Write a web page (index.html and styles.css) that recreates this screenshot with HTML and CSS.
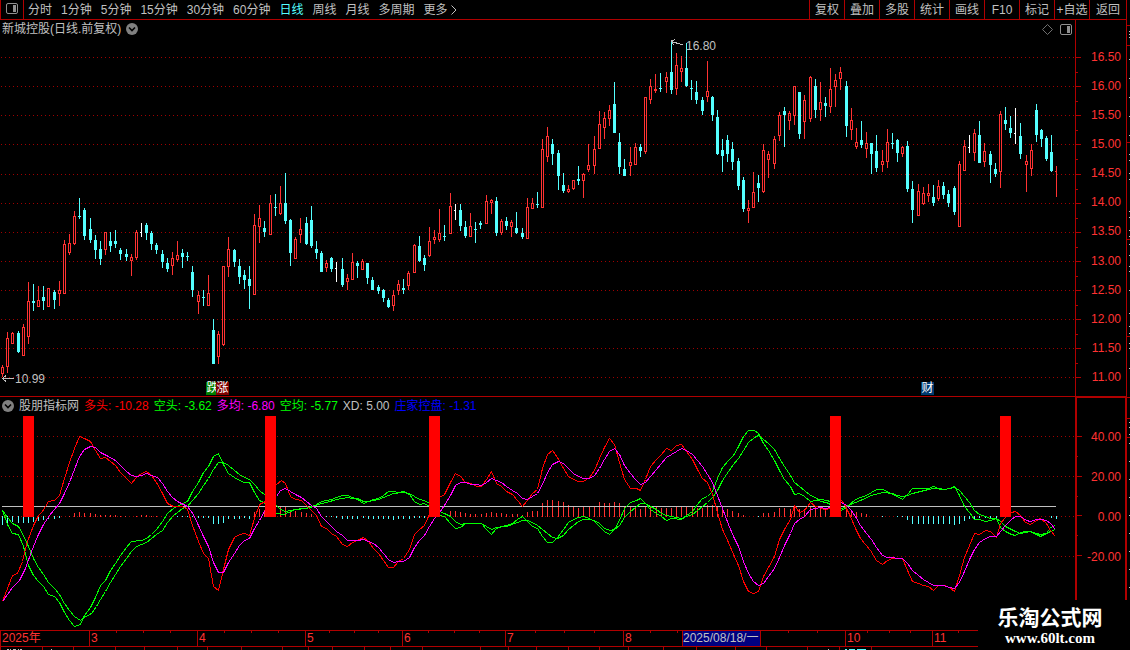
FILE: index.html
```html
<!DOCTYPE html>
<html lang="zh-CN">
  <head>
    <meta charset="UTF-8" />
    <meta name="viewport" content="width=device-width, initial-scale=1.0" />
    <title>新城控股 日线</title>
    <link rel="stylesheet" href="styles.css">
  </head>

  <body>
    <div class="app">
      <main class="main">
        <!-- Toolbar -->
        <nav class="toolbar">
          <button class="layout-btn" aria-label="布局">
            <svg width="12" height="11" viewBox="0 0 12 11">
              <rect x="0.5" y="0.5" width="11" height="10" rx="1.5" fill="none" stroke="#909090" />
              <rect x="7" y="2" width="3" height="7" fill="#909090" />
            </svg>
          </button>
          <div class="periods">
            <button>分时</button>
            <button>1分钟</button>
            <button>5分钟</button>
            <button>15分钟</button>
            <button>30分钟</button>
            <button>60分钟</button>
            <button class="active">日线</button>
            <button>周线</button>
            <button>月线</button>
            <button>多周期</button>
            <button>更多
              <svg width="6" height="10" viewBox="0 0 6 10"><path d="M0.5 0.5 L5 5 L0.5 9.5" fill="none" stroke="#c0c0c0" /></svg>
            </button>
          </div>
          <div class="tools">
            <button>复权</button>
            <button>叠加</button>
            <button>多股</button>
            <button>统计</button>
            <button>画线</button>
            <button>F10</button>
            <button>标记</button>
            <button>+自选</button>
            <button>返回</button>
          </div>
        </nav>

        <!-- Price chart -->
        <section class="panel price">
          <div class="plot">
            <svg id="priceChart" class="chart" viewBox="0 0 1075 376" preserveAspectRatio="none"></svg>
            <header class="panel-head">
              <span>新城控股(日线.前复权)</span>
              <svg class="drop" width="12" height="12" viewBox="0 0 12 12"><circle cx="6" cy="6" r="6" fill="#808080" /><path d="M3 4.5 L6 7.5 L9 4.5" fill="none" stroke="#000" stroke-width="1.6" /></svg>
              <span class="head-icons">
                <svg width="11" height="11" viewBox="0 0 11 11"><path d="M5.5 0.5 L10.5 5.5 L5.5 10.5 L0.5 5.5 Z" fill="none" stroke="#707070" /></svg>
                <svg width="12" height="11" viewBox="0 0 12 11"><rect x="0.5" y="0.5" width="11" height="10" rx="1.5" fill="none" stroke="#909090" /><rect x="7" y="2" width="3" height="7" fill="#909090" /></svg>
              </span>
            </header>
            <span class="mark high">16.80</span>
            <span class="mark low">10.99</span>
            <span class="badge fall">跌</span>
            <span class="badge rise">涨</span>
            <span class="badge report">财</span>
          </div>
          <div class="axis">
            <svg id="priceTicks" class="chart" viewBox="0 0 50 376" preserveAspectRatio="none"></svg>
            <span>16.50</span>
            <span>16.00</span>
            <span>15.50</span>
            <span>15.00</span>
            <span>14.50</span>
            <span>14.00</span>
            <span>13.50</span>
            <span>13.00</span>
            <span>12.50</span>
            <span>12.00</span>
            <span>11.50</span>
            <span>11.00</span>
          </div>
        </section>

        <!-- Indicator chart -->
        <section class="panel indicator">
          <div class="plot">
            <svg id="indicatorChart" class="chart" viewBox="0 0 1075 233" preserveAspectRatio="none"></svg>
            <header class="panel-head">
              <svg class="drop" width="12" height="12" viewBox="0 0 12 12"><circle cx="6" cy="6" r="6" fill="#808080" /><path d="M3 4.5 L6 7.5 L9 4.5" fill="none" stroke="#000" stroke-width="1.6" /></svg>
              <span>股朋指标网</span>
              <span class="red">多头: -10.28</span>
              <span class="green">空头: -3.62</span>
              <span class="magenta">多均: -6.80</span>
              <span class="green">空均: -5.77</span>
              <span>XD: 5.00</span>
              <span class="blue">庄家控盘: -1.31</span>
            </header>
          </div>
          <div class="axis">
            <svg id="indicatorTicks" class="chart" viewBox="0 0 50 233" preserveAspectRatio="none"></svg>
            <span>40.00</span>
            <span>20.00</span>
            <span>0.00</span>
            <span>-20.00</span>
          </div>
        </section>

        <!-- Time axis -->
        <div class="timeline">
          <svg id="timeTicks" class="chart" viewBox="0 0 1126 15" preserveAspectRatio="none"></svg>
          <span>2025年</span>
          <span>3</span>
          <span>4</span>
          <span>5</span>
          <span>6</span>
          <span>7</span>
          <span>8</span>
          <span class="current">2025/08/18/一</span>
          <span></span>
          <span>10</span>
          <span>11</span>
        </div>
        <div class="status">
          <svg id="statusStrip" class="chart" viewBox="0 0 1126 3" preserveAspectRatio="none"></svg>
        </div>
      </main>
      <aside class="side">
        <svg id="sideStrip" class="chart" viewBox="0 0 4 650" preserveAspectRatio="none"></svg>
      </aside>
      <div class="site">
        <strong>乐淘公式网</strong>
        <a href="#">www.60lt.com</a>
      </div>
    </div>
    <script src="script.js"></script>
  </body>
</html>
```
FILE: styles.css
```css
* {
  box-sizing: border-box;
}

body {
  margin: 0;
  background: #000;
  color: #c0c0c0;
  font: 12px/16px "Liberation Sans", "Noto Sans CJK SC", sans-serif;
  overflow: hidden;
}

button {
  padding: 0;
  border: none;
  background: none;
  color: inherit;
  font: inherit;
  white-space: nowrap;
  cursor: pointer;
}

.app {
  position: relative;
  display: flex;
  height: 100vh;
}

.main {
  flex: 1;
  min-width: 0;
  display: grid;
  grid-template-rows: 20px 377fr 233fr 17px 3px;
}

/* Toolbar */
.toolbar {
  display: flex;
  border-bottom: 1px solid #b00000;
}

.layout-btn {
  display: flex;
  align-items: center;
  justify-content: center;
  width: 24px;
  padding-bottom: 2px;
  border-left: 1px solid #b00000;
  border-right: 1px solid #b00000;
}

.periods {
  flex: 1;
  display: flex;
  gap: 9px;
  padding-left: 4px;
}

.periods .active {
  color: #54ffff;
}

.periods svg {
  vertical-align: -1px;
}

.tools {
  display: flex;
}

.tools button {
  width: 35px;
  border-left: 1px solid #b00000;
}

.tools button:last-child {
  width: 37px;
}

/* Chart panels */
.panel {
  display: flex;
  min-height: 0;
}

.price {
  border-bottom: 1px solid #b00000;
}

.plot {
  position: relative;
  flex: 1;
  min-width: 0;
}

.chart {
  position: absolute;
  top: 0;
  left: 0;
  width: 100%;
  height: 100%;
  shape-rendering: crispEdges;
}

.panel-head {
  position: relative;
  display: flex;
  align-items: center;
  gap: 5px;
  height: 18px;
  padding: 0 3px 0 2px;
  white-space: pre;
}

.head-icons {
  display: flex;
  gap: 7px;
  margin-left: auto;
}

.axis {
  position: relative;
  display: flex;
  flex-direction: column;
  justify-content: space-between;
  width: 51px;
  padding: 29px 5px 11px 0;
  border-left: 1px solid #b00000;
  color: #ff3232;
  text-align: right;
}

.indicator .axis {
  justify-content: flex-start;
  gap: 24px;
  padding-top: 31px;
  border-left-width: 2px;
  border-top: 1px solid #b00000;
}

.red { color: #ff0000; }
.green { color: #00ff00; }
.magenta { color: #ff00ff; }
.blue { color: #0000ff; }

/* Labels over the price chart */
.mark {
  position: absolute;
}

.high {
  top: 18px;
  left: 686px;
}

.low {
  bottom: 9px;
  left: 15px;
}

.badge {
  position: absolute;
  bottom: 1px;
  height: 13px;
  width: 13px;
  color: #fff;
  line-height: 13px;
  text-align: center;
}

.fall {
  left: 206px;
  background: #008000;
}

.rise {
  left: 216px;
  background: #800000;
}

.report {
  left: 921px;
  background: #003a70;
}

/* Time axis */
.timeline {
  position: relative;
  display: grid;
  grid-template-columns: 89fr 108fr 108fr 97fr 103fr 118fr 59fr 78fr 85fr 87fr 194fr;
  border-top: 1px solid #b00000;
  border-bottom: 1px solid #b00000;
  color: #ff3232;
  line-height: 15px;
}

.timeline span {
  min-width: 0;
  padding-left: 1px;
  border-left: 1px solid #b00000;
  white-space: nowrap;
}

.timeline .current {
  padding-left: 0;
  background: #000080;
  color: #c0c0c0;
}

.status {
  position: relative;
}

.side {
  position: relative;
  width: 4px;
}

/* Site name */
.site {
  position: absolute;
  right: 0;
  bottom: 0;
  width: 152px;
  height: 50px;
  padding: 6px 8px 0 0;
  background: #000;
  color: #fff;
  text-align: center;
}

.site strong {
  display: block;
  font-size: 21px;
  line-height: 24px;
}

.site a {
  display: block;
  color: #fff;
  font: bold 15px/16px "Liberation Serif", serif;
  text-decoration: none;
}
```
FILE: script.js
```js
const NS = "http://www.w3.org/2000/svg";
const RED = "#ff3232";
const CYAN = "#54ffff";
const LINE = "#b00000";

// Points are stored on a grid 3 times finer than the screen,
// each block relative to its own [x, y] origin.
// Candle: x, type, high, body top, body bottom, low
const candleBlocks = [
  { origin: [0, 180], rows: `
    7 r 556 562 581 590; 22 r 457 475 560 578; 37 r 457 458 491 491; 55 c 454 459 516 519; 70 r 433 441 527 527
    85 r 307 363 470 491; 100 c 312 363 369 392; 115 r 319 360 380 380; 130 c 318 351 363 389; 145 r 324 324 380 380
    163 c 331 336 360 386; 178 r 304 331 341 377; 193 r 181 192 341 341; 208 r 163 189 218 224; 223 r 94 108 191 194
    238 c 54 108 111 117; 253 c 84 90 168 180; 271 c 114 147 180 189; 286 c 165 180 210 237; 301 c 183 207 237 254
    316 r 156 156 209 224; 331 c 156 183 198 216; 346 c 150 183 192 204; 361 c 204 210 222 240; 379 c 207 222 231 243
    394 r 223 231 242 287; 409 r 151 156 234 239; 424 w 129 156 159 171; 439 c 129 135 159 180; 454 c 153 159 192 209
    469 c 189 195 210 222; 487 c 210 222 246 264; 502 c 234 249 267 276; 517 r 217 234 257 284; 532 r 183 225 239 245
    547 c 207 219 231 264; 562 c 216 228 231 243; 577 c 258 276 330 351; 595 r 334 345 366 401; 610 c 330 351 354 378
    625 r 286 339 377 377; 640 c 417 450 552 552; 655 r 454 461 530 551; 670 r 258 258 494 497; 685 r 171 207 260 290
    703 c 207 210 246 261` },
  { origin: [230, 160], rows: `
    28 c 297 318 351 372; 43 c 330 345 360 387; 58 c 318 357 378 447; 73 r 163 195 404 404; 88 r 136 174 200 248
    103 c 183 204 216 231; 121 r 106 129 224 224; 136 c 102 141 144 168; 151 r 79 129 161 165; 166 c 39 129 183 192
    181 c 177 180 279 318; 196 r 232 237 296 296; 211 r 175 207 224 248; 229 c 171 189 252 255; 244 c 138 180 258 264
    259 c 243 267 279 297; 274 c 273 279 336 336; 289 r 301 309 323 335; 304 c 291 294 327 336; 319 w 306 324 327 366
    337 c 294 327 375 381; 352 r 343 354 365 389; 367 r 280 306 359 359; 382 c 303 309 318 354; 397 r 298 303 329 329
    412 c 309 309 354 372; 427 c 351 360 390 390; 445 c 375 381 393 402; 460 c 387 390 414 426; 475 c 414 420 441 444
    490 r 391 405 437 452; 505 r 361 372 392 404; 520 c 357 384 390 402; 535 r 334 339 377 389; 553 r 253 255 338 338
    568 c 228 258 303 306; 583 c 285 294 315 333; 598 r 202 243 287 290; 613 r 211 231 239 251; 628 r 148 219 239 245
    643 c 195 228 231 243; 661 r 100 138 221 221; 676 w 132 150 153 180; 691 c 132 150 198 213; 706 c 183 201 228 234` },
  { origin: [460, 110], rows: `
    31 r 310 348 380 380; 46 c 336 357 360 399; 61 c 333 339 345 357; 79 r 256 273 341 341; 94 r 268 270 278 311
    109 c 261 273 369 378; 124 r 328 333 368 374; 139 c 321 333 348 360; 154 r 331 336 350 380; 169 c 306 354 369 372
    187 c 354 369 381 387; 202 r 265 291 386 386; 217 r 265 279 296 296; 232 c 246 282 285 294; 247 r 88 117 293 293
    262 r 52 78 140 155; 277 c 87 102 132 165; 295 c 120 129 198 240; 310 c 189 225 243 249; 325 r 226 237 245 248
    340 r 210 210 236 239; 355 c 168 207 213 225; 370 r 190 192 212 263; 385 r 103 165 179 185; 403 r 79 117 167 191
    418 r 4 42 116 116; 433 r 7 24 53 86; 448 r -15 0 26 47; 463 c -84 -18 69 69; 478 c 69 96 171 192
    493 c 147 177 198 198; 511 r 112 156 167 197; 526 r 100 111 164 164; 541 c 102 111 123 141` },
  { origin: [630, 30], rows: `
    46 r 202 202 365 371; 61 r 148 168 209 221; 76 r 133 177 182 188; 91 c 129 174 177 186; 109 r 127 141 155 188
    124 c 30 126 180 192; 139 r 70 105 176 194; 154 r 79 114 125 155; 169 c 40 114 168 171; 184 c 150 174 177 210
    199 c 153 186 210 222; 217 c 201 210 243 255; 232 r 94 183 200 215; 247 c 198 201 255 273; 262 c 240 261 372 375
    277 c 327 360 378 426; 292 c 315 330 372 396; 307 c 336 357 396 420; 325 c 384 393 468 480; 340 c 441 450 537 546
    355 r 511 534 542 578; 370 r 427 486 533 533; 385 c 435 459 474 516; 400 r 343 360 485 488; 415 r 364 372 389 443
    433 r 319 327 401 416; 448 r 247 255 317 332; 463 c 231 243 255 351; 478 r 244 249 272 299; 493 r 168 168 257 284
    508 c 186 186 312 327; 523 r 196 210 275 326; 541 r 139 141 266 275; 556 c 147 168 240 264; 571 r 157 216 239 272
    586 c 201 219 228 261; 601 r 115 177 230 248; 616 r 133 150 170 230; 631 r 112 126 146 179` },
  { origin: [830, 60], rows: `
    49 c 63 78 198 231; 64 r 145 180 209 239; 79 r 205 246 260 266; 94 c 183 240 255 264; 109 r 217 249 266 293
    124 c 249 249 282 342; 139 c 225 273 324 336; 157 r 271 303 314 335; 172 r 208 246 305 323; 187 c 219 249 252 267
    202 c 237 240 279 306; 217 r 259 261 281 290; 232 c 243 258 387 396; 247 c 363 387 450 489; 265 r 373 393 467 467
    280 r 382 399 431 434; 295 r 373 399 407 425; 310 c 375 411 429 438; 325 r 361 378 416 422; 340 c 366 378 405 417
    355 c 390 402 429 441; 373 c 378 384 456 465; 388 r 304 312 500 500; 403 r 241 258 332 332; 418 w 225 261 264 279
    433 r 208 219 278 302; 448 c 183 225 309 309; 463 r 250 273 305 320; 481 c 273 282 315 369; 496 c 309 327 342 351
    511 r 154 162 335 383; 526 c 141 180 192 210; 541 c 168 204 219 234; 556 w 144 219 222 252; 571 c 189 228 282 297
    589 r 286 303 314 395; 604 r 253 270 326 347; 619 c 132 150 225 246; 634 c 207 210 237 261; 649 c 228 234 297 303
    664 c 225 276 333 336; 679 r 318 333 336 410` },
];

// Origins of the four indicator blocks
const origins = [[0, 395], [270, 395], [540, 395], [820, 375]];

const curves = [
  { color: "#00ff00", blocks: [
    "7,347 22,388 37,415 55,418 70,455 85,512 100,540 115,560 130,575 145,598 163,604 178,622 193,653 208,675 223,693 240,687 253,662 270,638 286,607 301,570 316,555 331,526 346,506 361,480 379,458 394,439 424,437 439,430 454,418 470,402 487,380 502,355 520,341 547,326 563,318 577,290 595,263 610,233 625,213 640,183 655,175 670,208 685,235 703,248 718,257 733,262 748,262 763,293 778,315 795,325",
    "18,354 40,358 55,352 77,342 100,340 125,337 139,327 155,318 170,315 185,313 200,308 217,300 232,300 247,306 262,314 279,325 294,319 309,314 324,310 340,301 355,290 371,288 386,292 401,289 417,297 432,320 447,328 462,325 478,335 508,360 522,363 540,385 557,401 571,396 587,386 604,384 618,385 633,385 649,402 664,417 679,399 694,395 710,390 726,384 741,373 757,363 772,380 788,394 802,401",
    "7,423 22,441 37,442 53,427 70,404 85,383 100,373 115,366 130,364 147,371 163,378 178,395 194,410 208,417 223,404 238,375 254,340 270,322 290,317 302,310 317,325 332,343 348,355 363,365 380,376 393,370 424,372 440,362 456,349 471,328 486,311 502,303 517,290 532,250 547,217 564,197 580,180 595,154 610,125 625,106 643,106 656,114 671,145 686,165 703,195 719,225 734,252 750,273 764,298 779,295 794,304 812,319",
    "0,373 20,376 30,380 64,405 80,397 106,374 122,366 138,361 153,353 168,344 187,344 203,350 217,357 232,365 247,373 262,358 277,341 325,341 341,335 356,341 373,343 388,340 404,335 418,362 433,393 449,412 463,432 479,434 495,439 510,435 528,430 540,458 556,470 573,478 587,482 602,473 620,469 631,470 648,477 662,485 678,476 692,457 707,451"] },
  { color: "#00ff00", blocks: [
    "7,347 22,368 37,385 55,395 70,420 85,455 100,490 115,517 130,539 145,562 163,580 178,598 193,624 208,645 223,665 240,675 253,668 275,654 289,635 301,612 316,588 331,562 346,538 361,513 379,489 394,469 409,455 424,449 439,441 454,430 470,418 487,405 502,382 520,362 532,353 547,339 563,333 577,317 595,296 610,270 625,250 640,222 655,203 670,201 685,212 703,225 718,239 733,246 748,253 763,268 778,285 795,300",
    "18,332 32,342 46,350 77,343 109,340 125,335 155,325 170,322 200,312 232,306 247,309 262,311 279,318 294,319 309,315 324,313 340,307 355,300 371,295 401,291 417,296 432,304 447,312 462,317 478,326 508,348 522,354 540,365 557,380 571,388 587,385 633,385 649,394 664,403 679,398 710,394 741,383 757,376 772,376 788,381 802,391",
    "7,403 22,416 37,427 53,429 70,421 85,404 100,391 115,380 130,374 147,372 163,375 178,386 194,399 210,405 223,403 238,391 254,368 270,350 285,338 302,325 317,325 332,335 348,344 363,354 380,361 393,365 424,370 440,364 456,357 471,345 486,335 502,322 517,307 532,285 547,257 564,230 580,207 595,190 610,165 625,143 643,128 656,122 671,132 686,146 703,163 719,190 734,213 750,241 764,263 779,275 794,287 812,301 826,307",
    "0,380 20,382 30,388 64,400 80,393 106,382 122,376 153,362 187,352 217,356 232,360 247,365 262,361 277,354 300,348 325,343 341,340 373,344 404,338 418,347 433,363 449,383 463,405 479,417 495,425 510,430 528,430 540,440 556,454 573,464 587,470 602,474 631,470 648,474 662,479 678,476 692,468 707,463"] },
  { color: "#ff0000", blocks: [
    "7,620 22,580 37,542 52,535 67,500 82,440 100,392 115,362 128,348 145,320 163,315 178,302 193,250 208,203 223,160 238,125 253,129 270,138 286,165 301,190 316,187 331,200 346,210 361,231 376,247 394,265 409,246 424,235 439,230 454,240 470,262 487,294 502,325 520,333 547,333 563,342 577,392 595,440 610,475 625,490 640,575 655,585 670,523 685,464 703,427 718,418 733,415 748,420 763,370 778,328 795,318",
    "18,268 33,257 46,264 62,304 77,313 93,317 109,331 125,346 139,362 155,393 170,401 185,416 200,425 217,447 232,454 247,443 262,436 279,428 294,439 309,461 324,474 340,497 355,517 371,517 386,499 401,491 417,464 432,417 447,402 462,392 472,370 490,335 508,308 522,298 540,262 557,235 571,243 587,263 604,266 618,274 633,273 649,252 664,230 679,265 694,275 710,290 726,297 741,317 757,333 772,315 788,294 802,284",
    "7,220 22,178 37,167 53,188 70,219 85,245 100,254 115,260 130,259 147,248 163,227 178,189 194,156 208,131 223,148 238,203 254,254 270,280 290,281 302,287 315,252 332,215 348,193 363,177 380,160 393,167 410,152 424,148 440,170 456,192 471,222 486,251 502,262 517,297 532,353 547,402 564,443 580,478 595,512 610,560 625,590 640,596 656,590 671,545 686,517 703,483 719,432 734,404 750,372 764,331 779,353 794,346 812,321 826,333",
    "2,397 17,405 64,375 72,389 91,425 106,460 122,490 152,525 168,556 187,568 203,555 217,550 247,549 262,585 277,619 294,625 310,630 325,634 341,645 356,632 373,632 388,638 404,650 418,600 433,547 449,512 463,475 479,477 495,466 510,470 528,486 540,445 556,427 573,412 586,409 600,422 616,443 631,448 648,437 662,430 678,446 692,467 707,485"] },
  { color: "#ff00ff", blocks: [
    "7,620 37,577 58,557 77,520 95,468 112,425 130,388 148,360 178,326 193,296 208,262 223,222 238,183 253,163 270,154 286,156 301,172 320,181 346,197 361,211 379,228 394,240 409,245 424,241 439,235 454,240 472,248 487,265 502,289 517,308 532,318 563,333 580,357 595,391 610,424 625,455 640,502 655,531 670,532 685,502 703,474 718,452 733,437 748,430 763,400 778,376 793,348 810,325",
    "18,303 32,286 46,279 62,289 77,299 93,306 109,318 125,330 139,341 155,365 185,394 200,408 217,422 232,436 262,436 279,433 294,438 309,446 324,458 340,474 355,493 371,502 386,498 401,500 417,486 432,458 447,435 462,420 478,395 493,370 508,352 522,330 540,300 557,272 571,262 587,262 604,267 618,268 633,271 649,261 664,250 679,256 694,263 710,275 726,285 741,296 757,309 772,314 788,304 802,296",
    "7,268 22,232 37,207 55,200 70,206 85,221 100,236 115,244 130,250 147,250 163,242 178,220 194,194 208,169 223,160 238,177 254,210 270,235 285,254 302,268 315,262 332,243 348,222 363,204 380,188 393,179 410,169 424,160 440,165 456,177 471,196 486,215 502,238 517,262 532,300 547,340 564,387 580,425 595,455 610,500 625,535 640,558 656,571 671,566 686,545 703,520 719,488 734,450 750,415 764,385 779,374 794,363 812,344",
    "0,398 15,401 30,396 64,382 80,392 92,403 106,424 122,452 138,474 153,492 168,518 187,540 203,548 247,551 262,566 277,587 294,600 310,613 325,622 341,631 370,631 388,636 404,641 418,622 433,588 449,552 463,524 479,502 495,490 510,484 528,484 540,470 556,450 573,432 587,425 600,423 620,435 631,440 648,434 662,432 678,436 692,445 707,464"] },
];

// Histogram: x, end of the bar; ends above the zero line are red
const histogram = [
  "7,390 22,390 37,382 55,384 70,384 85,384 100,382 115,378 130,375 145,372 163,372 178,369 208,362 223,353 238,350 253,354 270,353 286,357 301,360 316,360 331,360 346,360 361,362 376,362 409,362 424,360 439,360 454,362 470,362 532,366 547,366 563,366 577,367 595,369 610,369 625,370 640,387 655,387 670,384 685,373 703,372 718,372 733,370 748,372 763,350 778,342 793,345",
  "32,336 46,334 62,346 77,349 93,351 109,354 125,357 170,366 185,366 200,370 217,372 232,372 247,372 262,372 279,370 294,372 309,372 324,372 340,372 355,372 371,375 386,372 401,372 417,372 432,369 447,369 462,369 542,348 557,348 571,351 587,354 602,357 617,357 633,357 649,354 664,351 679,354 694,354 710,357 726,357 741,357 757,361 772,351 788,348 802,348 817,324 833,315 848,315 865,318",
  "70,321 85,331 100,336 115,339 130,336 147,334 163,334 178,321 194,324 208,324 223,321 238,324 254,336 270,336 286,340 302,342 317,336 332,334 348,336 363,339 380,339 393,339 410,334 425,336 440,336 456,336 471,340 486,340 502,331 517,331 532,334 547,340 562,342 577,348 595,354 610,360 656,366 671,354 686,354 703,351 719,339 734,339 750,342 764,333 779,342 794,342 812,334 826,336",
  "1,399 16,402 80,400 94,405 109,411 124,414 139,417 187,426 232,426 247,426 262,434 277,447 294,447 310,447 325,447 341,447 356,447 370,447 388,447 404,450 418,447 433,438 449,432 463,432 479,430 495,430 510,430 528,430 694,430 709,432",
];

function draw(svg, tag, attrs) {
  const el = document.createElementNS(NS, tag);
  for (const name in attrs) el.setAttribute(name, attrs[name]);
  svg.appendChild(el);
}

function rect(svg, x, y, width, height, fill) {
  draw(svg, "rect", { x, y, width, height, fill });
}

function gridLine(svg, y) {
  draw(svg, "line", { x1: 1, x2: 1075, y1: y + 0.5, y2: y + 0.5, stroke: "#a00000", "stroke-dasharray": "1 3" });
}

function drawPrice() {
  const svg = document.getElementById("priceChart");
  const ticks = document.getElementById("priceTicks");
  [37, 66, 95, 124, 154, 183, 212, 241, 270, 299, 328, 357].forEach((y, i) => {
    gridLine(svg, y);
    rect(ticks, 0, y, 5, 1, LINE);
    if (i < 11) rect(ticks, 0, y + 15, 2, 1, LINE);
  });

  const colors = { r: RED, c: CYAN, w: "#ffffff" };
  for (const { origin, rows } of candleBlocks) {
    for (const row of rows.trim().split(/[;\n]\s*/)) {
      const [xs, type, ...values] = row.trim().split(" ");
      const x = origin[0] + Math.floor(xs / 3);
      const [high, top, bottom, low] = values.map((v) => origin[1] - 20 + Math.round(v / 3));
      const color = colors[type];
      if (type === "r" && bottom - top > 1) {
        rect(svg, x, high, 1, top - high, color);
        rect(svg, x, bottom, 1, Math.max(0, low - bottom), color);
        draw(svg, "rect", { x: x - 0.5, y: top + 0.5, width: 2, height: bottom - top - 1, fill: "none", stroke: color });
      } else {
        rect(svg, x, high, 1, low - high, color);
        const half = type === "w" || type === "r";
        rect(svg, x - 1, top, half ? 1 : 3, bottom - top, color);
      }
    }
  }

  // Arrows to the highest and the lowest price
  draw(svg, "path", { d: "M2 358.5 H14 M6 355.5 L2.5 358.5 L6 361.5", fill: "none", stroke: "#c0c0c0" });
  draw(svg, "path", { d: "M671.5 21.5 L683 25 M675 19.5 L671.5 21 L673.5 25", fill: "none", stroke: "#c0c0c0" });
}

function drawIndicator() {
  const svg = document.getElementById("indicatorChart");
  const ticks = document.getElementById("indicatorTicks");
  [39, 79, 119, 159].forEach((y, i) => {
    gridLine(svg, y);
    rect(ticks, 0, y - 1, 5, 1, LINE);
    if (i < 3) rect(ticks, 0, y + 19, 1, 1, LINE);
  });
  // Right edge of the selected axis
  rect(ticks, 49, 0, 1, 203, LINE);

  histogram.forEach((block, i) => {
    const [ox, oy] = origins[i];
    for (const pair of block.split(" ")) {
      const [px, py] = pair.split(",");
      const end = oy - 397 + Math.round(py / 3);
      const x = ox + Math.floor(px / 3);
      if (end <= 119) rect(svg, x, end, 1, 120 - end, RED);
      else rect(svg, x, 119, 1, end - 119, CYAN);
    }
  });

  rect(svg, 2, 109, 1054, 1, "#c0c0c0");

  for (const { color, blocks } of curves) {
    const points = blocks.flatMap((block, i) =>
      block.split(" ").map((pair) => {
        const [px, py] = pair.split(",");
        const x = origins[i][0] + Math.floor(px / 3) + 0.5;
        const y = origins[i][1] - 397 + Math.floor(py / 3) + 0.5;
        return x + "," + y;
      })
    );
    draw(svg, "polyline", { points: points.join(" "), fill: "none", stroke: color });
  }

  // Signal bars
  for (const x of [23, 265, 429, 830, 1000]) rect(svg, x, 19, 11, 101, "#ff0000");
}

function drawStrips() {
  const time = document.getElementById("timeTicks");
  for (const x of [116, 143, 170, 224, 251, 278, 329, 354, 378, 428, 454, 479, 535, 564, 594, 650, 677, 788, 817, 867, 889, 910, 958]) {
    rect(time, x, 0, 1, 2, LINE);
  }

  const status = document.getElementById("statusStrip");
  for (const x of [0, 42, 73, 115, 144, 177, 207, 241, 282, 308, 332, 364, 390, 422, 480, 508, 536, 568, 599, 628, 663, 696, 735, 766, 807, 839, 871]) {
    rect(status, x, 0, 1, 3, LINE);
  }
  for (const [x, w] of [[7, 2], [10, 1], [13, 3], [18, 1], [20, 2], [51, 1], [828, 1]]) rect(status, x, 2, w, 1, "#c0c0c0");
  for (const [x, w] of [[845, 2], [849, 6], [857, 9]]) rect(status, x, 2, w, 1, CYAN);

  const side = document.getElementById("sideStrip");
  rect(side, 0, 0, 1, 600, LINE);
  for (const y of [25, 45, 142, 239, 336, 397, 418, 437]) rect(side, 0, y, 4, 1, LINE);
  for (const y of [31, 34, 37, 59, 78, 97, 116, 135, 154, 160, 173, 179, 211, 217, 230, 236, 244, 255, 266, 271, 290, 313, 326, 333, 343, 348, 368, 422, 427, 434, 443, 461, 479, 497, 515, 533, 551, 569, 587]) {
    rect(side, 3, y, 1, 1, "#c0c0c0");
  }
}

drawPrice();
drawIndicator();
drawStrips();
```
